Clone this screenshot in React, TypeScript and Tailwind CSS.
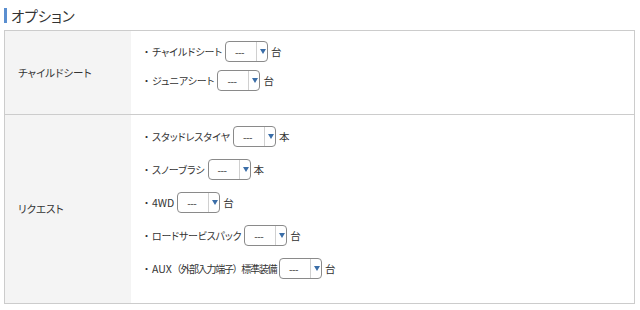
import React from "react";

const font = { fontFamily: '"Noto Sans CJK JP", "Noto Sans", sans-serif' };

function Select() {
  return (
    <div className="flex h-[21px] w-[43px] items-center rounded-[4px] border border-[#8a8a8a] bg-white">
      <span className="ml-[9px] w-[21px] text-[10px] leading-none tracking-[-0.5px] text-[#333]">---</span>
      <span className="h-full w-px bg-[#d0d0d0]" />
      <span className="ml-[3px] flex h-full items-center">
        <svg width="6" height="5" viewBox="0 0 6 5">
          <path d="M0 0 H6 L3 5 Z" fill="#3b6ea8" />
        </svg>
      </span>
    </div>
  );
}

function Item({ children, unit }: { children: React.ReactNode; unit: string }) {
  return (
    <div className="flex h-[21px] items-center text-[10px] text-[#333]">
      <span className="inline-block w-[11px] text-center">・</span>
      <span className="whitespace-nowrap">{children}</span>
      <span className="ml-[3px]">
        <Select />
      </span>
      <span className="ml-[3px] text-[10.5px]">{unit}</span>
    </div>
  );
}

const Kana = ({ t }: { t: string }) => (
  <span className="[font-feature-settings:'palt']">{t}</span>
);

export default function App() {
  return (
    <div className="h-[310px] w-[640px] bg-white" style={font}>
      <div className="flex items-center pt-[8px] pl-[4px]">
        <div className="h-[15px] w-[3px] bg-[#5b8fd0]" />
        <div className="ml-[4px] text-[14.5px] leading-[15px] text-[#333] [font-feature-settings:'palt']">
          オプション
        </div>
      </div>
      <div className="ml-[4px] mt-[7px] w-[631px] border border-[#cccccc]">
        <div className="flex border-b border-[#cccccc]">
          <div className="flex w-[126px] items-center bg-[#f4f4f4] pl-[13px] text-[10.5px] text-[#333] [font-feature-settings:'palt']">
            チャイルドシート
          </div>
          <div className="flex flex-col gap-[8px] pl-[10px] pt-[10px] pb-[23px]">
            <Item unit="台"><Kana t="チャイルドシート" /></Item>
            <Item unit="台"><Kana t="ジュニアシート" /></Item>
          </div>
        </div>
        <div className="flex">
          <div className="flex w-[126px] items-center bg-[#f4f4f4] pl-[13px] text-[10.5px] text-[#333] [font-feature-settings:'palt']">
            リクエスト
          </div>
          <div className="flex flex-col gap-[12px] pl-[10px] pt-[11px] pb-[24px]">
            <Item unit="本"><Kana t="スタッドレスタイヤ" /></Item>
            <Item unit="本"><Kana t="スノーブラシ" /></Item>
            <Item unit="台"><span className="text-[10.5px]">4WD</span></Item>
            <Item unit="台"><span className="[font-feature-settings:'palt'] tracking-[-0.2px]">ロードサービスパック</span></Item>
            <Item unit="台">
              <span className="text-[10.5px]">AUX</span>
              <span className="tracking-[-1.3px]">（外部入力端子）標準装備</span>
            </Item>
          </div>
        </div>
      </div>
    </div>
  );
}
